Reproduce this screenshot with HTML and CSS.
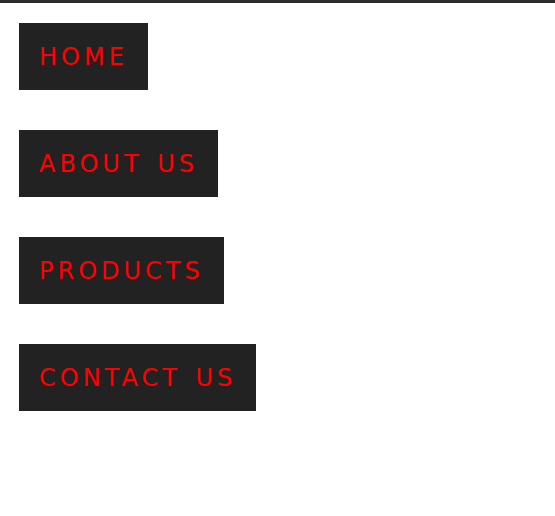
FILE: index.html
```html
<!DOCTYPE html>
<html>
<head>
<meta charset="utf-8">
<link rel="stylesheet" href="styles.css">
</head>
<body>
<nav class="menu">
  <a class="item" href="#">HOME</a>
  <a class="item" href="#">ABOUT US</a>
  <a class="item" href="#">PRODUCTS</a>
  <a class="item" href="#">CONTACT US</a>
</nav>
</body>
</html>
```
FILE: styles.css
```css
html, body {
  margin: 0;
  padding: 0;
  background: #fff;
}
body {
  border-top: 3px solid #2b2b2b;
  font-family: "DejaVu Sans", Verdana, sans-serif;
}
.menu {
  display: flex;
  flex-direction: column;
  align-items: flex-start;
  gap: 40px;
  padding: 20px 19px;
}
.item {
  display: block;
  background: #222;
  color: #ff0000;
  text-decoration: none;
  font-size: 24px;
  line-height: 27px;
  letter-spacing: 4px;
  word-spacing: 3px;
  padding: 21px 20px 19px;
}
```
